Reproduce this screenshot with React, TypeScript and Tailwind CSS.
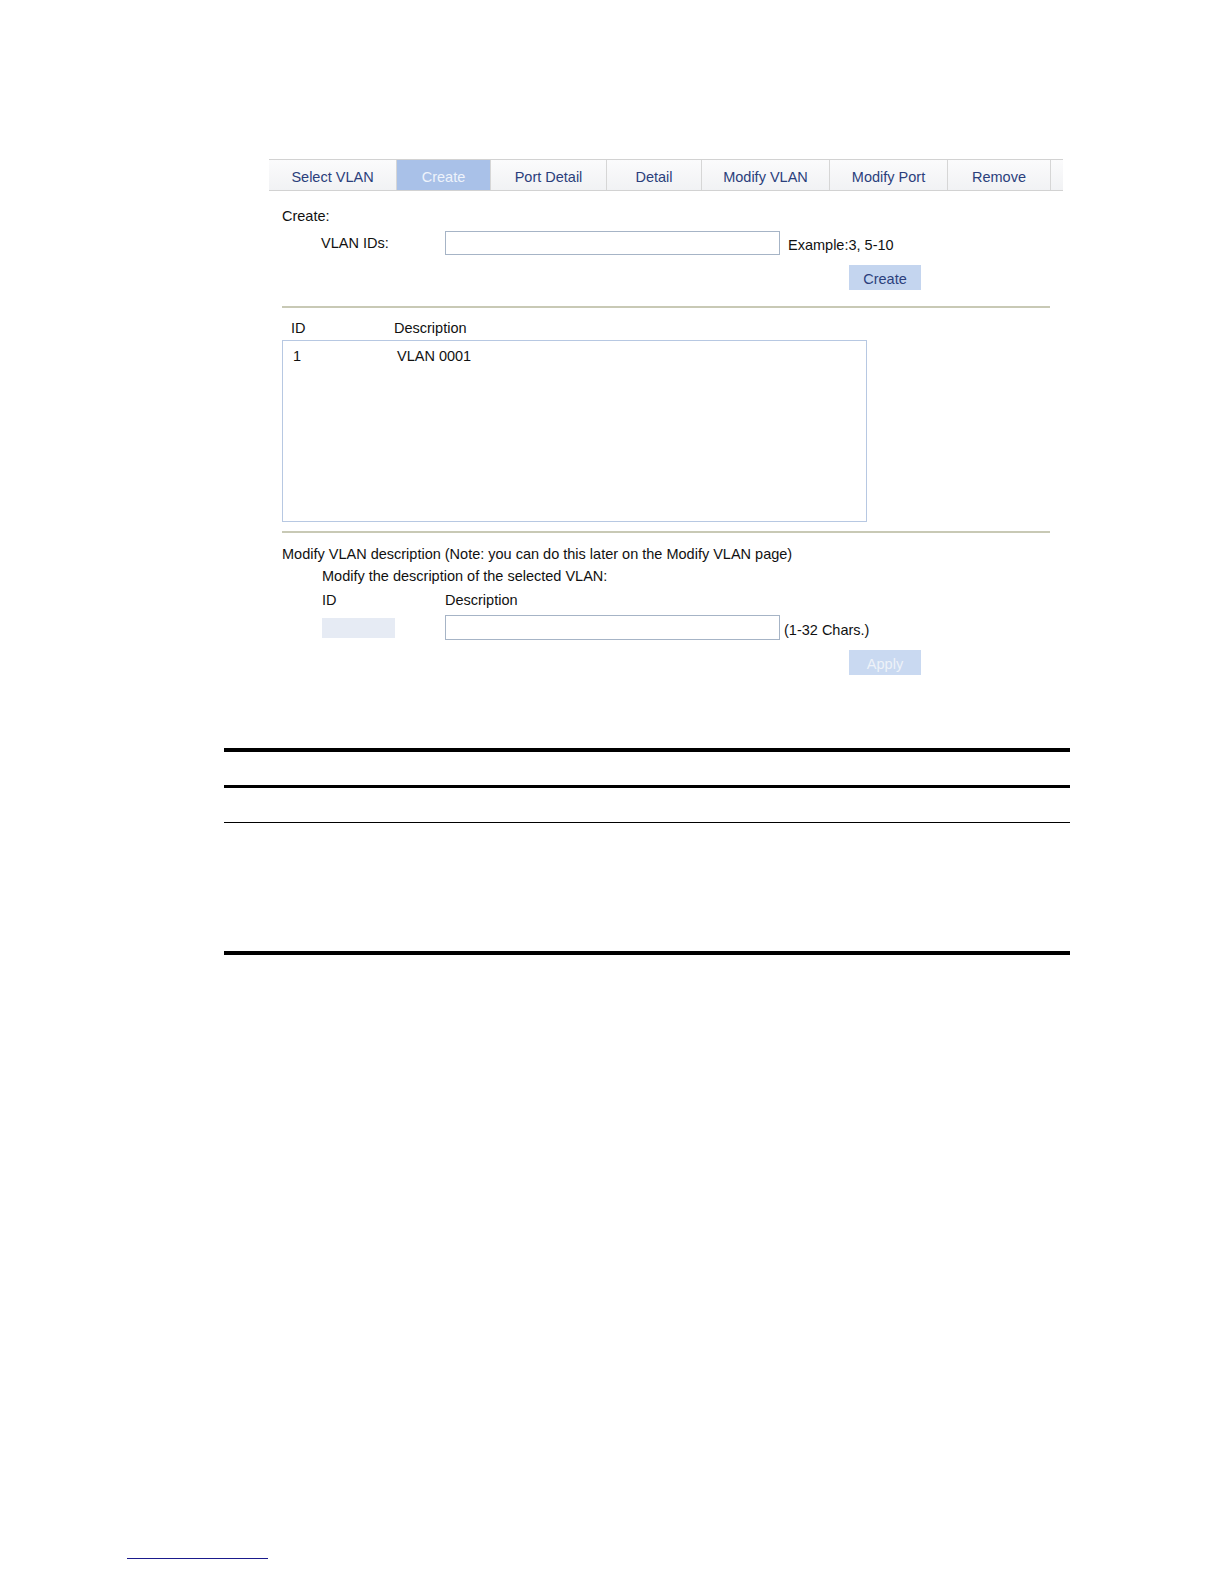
export default function App() {
  const tabs: { label: string; w: string; active?: boolean }[] = [
    { label: "Select VLAN", w: "w-[128px]" },
    { label: "Create", w: "w-[94px]", active: true },
    { label: "Port Detail", w: "w-[116px]" },
    { label: "Detail", w: "w-[95px]" },
    { label: "Modify VLAN", w: "w-[128px]" },
    { label: "Modify Port", w: "w-[118px]" },
    { label: "Remove", w: "w-[103px]" },
  ];
  return (
    <div className="w-[1224px] h-[1584px] bg-white font-['Liberation_Sans',Arial,sans-serif] text-[14.5px] leading-[16px] text-[#111]">
      <div className="pt-[159px] pl-[269px]">
        <div className="w-[794px] h-[32px] flex border-t border-b border-[#d2d2d2] bg-gradient-to-b from-[#fbfbfc] to-[#f1f2f4]">
          {tabs.map((t) => (
            <div
              key={t.label}
              className={
                t.w +
                " h-full flex items-center justify-center border-r border-[#d6d6d6] " +
                (t.active ? "bg-[#a9c1e8] text-[#eef3fb]" : "text-[#2b3f7c]")
              }
            >
              <span className="pt-[4px]">{t.label}</span>
            </div>
          ))}
          <div className="flex-1" />
        </div>
      </div>

      <div className="pl-[282px] w-[1050px]">
        <div className="mt-[17px] h-[16px]">Create:</div>
        <div className="mt-[7px] flex items-center h-[24px]">
          <div className="w-[163px] pl-[39px]">VLAN IDs:</div>
          <div className="w-[335px] h-[24px] border border-[#a6b4c6] bg-white" />
          <div className="ml-[8px] pt-[4px]">Example:3, 5-10</div>
        </div>
        <div className="mt-[10px] ml-[567px] w-[72px] h-[25px] bg-[#c4d5ef] text-[#2b3f7c] flex items-center justify-center">
          <span className="pt-[3px]">Create</span>
        </div>
        <div className="mt-[16px] w-[768px] h-[2px] bg-[#c8c9b5]" />

        <div className="mt-[12px] flex h-[16px]">
          <div className="w-[112px] pl-[9px]">ID</div>
          <div>Description</div>
        </div>
        <div className="mt-[4px] w-[585px] h-[182px] border border-[#b7c8e2] bg-white">
          <div className="flex pt-[7px]">
            <div className="w-[114px] pl-[10px]">1</div>
            <div>VLAN 0001</div>
          </div>
        </div>
        <div className="mt-[9px] w-[768px] h-[2px] bg-[#c8c9b5]" />

        <div className="mt-[13px] h-[16px]">
          Modify VLAN description (Note: you can do this later on the Modify VLAN page)
        </div>
        <div className="mt-[6px] pl-[40px]">
          <div className="h-[16px]">Modify the description of the selected VLAN:</div>
          <div className="mt-[8px] flex h-[16px]">
            <div className="w-[123px]">ID</div>
            <div>Description</div>
          </div>
          <div className="mt-[7px] flex items-center h-[25px]">
            <div className="w-[73px] h-[20px] bg-[#e6ebf4]" />
            <div className="ml-[50px] w-[335px] h-[25px] border border-[#a6b4c6] bg-white" />
            <div className="ml-[4px] pt-[4px]">(1-32 Chars.)</div>
          </div>
        </div>
        <div className="mt-[10px] ml-[567px] w-[72px] h-[25px] bg-[#c9d9f1] text-[#eef2f8] flex items-center justify-center">
          <span className="pt-[3px]">Apply</span>
        </div>
      </div>

      <div className="pl-[224px]">
        <div className="mt-[73px] w-[846px] h-[4px] bg-black" />
        <div className="mt-[33px] w-[846px] h-[3px] bg-black" />
        <div className="mt-[34px] w-[846px] h-[1px] bg-black" />
        <div className="mt-[128px] w-[846px] h-[4px] bg-black" />
      </div>

      <div className="pl-[127px]">
        <div className="mt-[603px] w-[141px] h-[1px] bg-[#1a1a8c]" />
      </div>
    </div>
  );
}
